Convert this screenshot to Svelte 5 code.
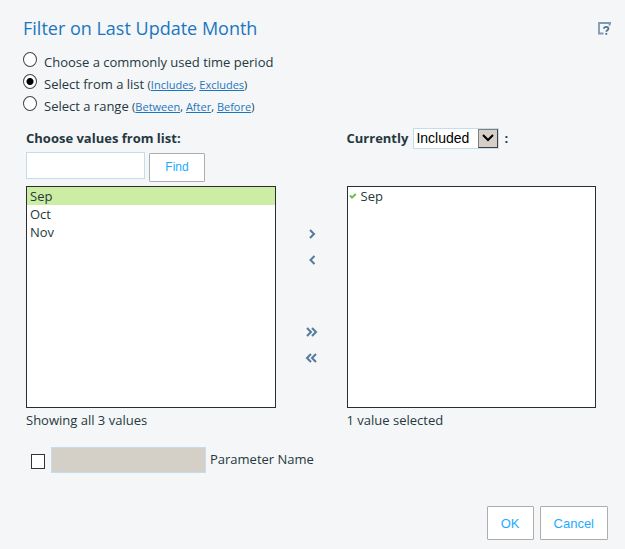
<script>
  const periods = [
    { id: 'common', label: 'Choose a commonly used time period', links: [] },
    { id: 'list', label: 'Select from a list', links: ['Includes', 'Excludes'] },
    { id: 'range', label: 'Select a range', links: ['Between', 'After', 'Before'] }
  ];
  const months = ['Sep', 'Oct', 'Nov'];

  let mode = $state('list');
  let search = $state('');
  let active = $state('Sep');
  let chosen = $state(['Sep']);
  let inclusion = $state('Included');
  let useParameter = $state(false);
  let parameter = $state('');

  let visible = $derived(months.filter((m) => m.toLowerCase().includes(search.toLowerCase())));

  const add = () => {
    if (!chosen.includes(active)) chosen = [...chosen, active];
  };
  const remove = () => (chosen = chosen.filter((m) => m !== active));
  const addAll = () => (chosen = [...months]);
  const removeAll = () => (chosen = []);
</script>

<main class="dialog">
  <header>
    <h1>Filter on Last Update Month</h1>
    <button class="icon" aria-label="Help">
      <svg width="13" height="13" viewBox="0 0 13 13" fill="none" stroke="#7f9ab2">
        <path d="M5.5 11.5H1V1h11.2L11.2 3.6" stroke-width="1.8" />
        <path d="M6 6.8c0-2.5 4.4-2.5 4.4 0 0 1.5-2.1 1.3-2.1 3" stroke="#4f7595" stroke-width="1.8" />
        <path d="M8.3 10.9v1.9" stroke="#4f7595" stroke-width="1.8" />
      </svg>
    </button>
  </header>

  <div class="modes" role="radiogroup" aria-label="Filter type">
    {#each periods as p (p.id)}
      <div class="mode">
        <input type="radio" name="mode" id={p.id} value={p.id} bind:group={mode} />
        <span class="caption">
          <label for={p.id}>{p.label}</label>
          {#if p.links.length}
            <small>({#each p.links as link, i (link)}{i > 0 ? ', ' : ''}<a href="#{link}">{link}</a>{/each})</small>
          {/if}
        </span>
      </div>
    {/each}
  </div>

  <div class="picker">
    <section>
      <div class="heading"><label for="search">Choose values from list:</label></div>
      <div class="search">
        <input class="field" id="search" type="text" bind:value={search} />
        <button class="push find">Find</button>
      </div>
      <ul class="box">
        {#each visible as m (m)}
          <li><button class="row" class:active={m === active} onclick={() => (active = m)}>{m}</button></li>
        {/each}
      </ul>
      <p>Showing all {visible.length} values</p>
    </section>

    <div class="arrows">
      <button class="icon" aria-label="Add" onclick={add}>
        <svg width="14" height="10" viewBox="0 0 14 10"><path d="M5 1l4 4-4 4" /></svg>
      </button>
      <button class="icon" aria-label="Remove" onclick={remove}>
        <svg width="14" height="10" viewBox="0 0 14 10"><path d="M9.5 1l-4 4 4 4" /></svg>
      </button>
      <button class="icon all" aria-label="Add all" onclick={addAll}>
        <svg width="14" height="10" viewBox="0 0 14 10"><path d="M2 1l4 4-4 4M7 1l4 4-4 4" /></svg>
      </button>
      <button class="icon" aria-label="Remove all" onclick={removeAll}>
        <svg width="14" height="10" viewBox="0 0 14 10"><path d="M6 1L2 5l4 4M11 1L7 5l4 4" /></svg>
      </button>
    </div>

    <section>
      <div class="heading">
        <label for="inclusion">Currently</label>
        <span class="dropdown">
          <select id="inclusion" bind:value={inclusion}>
            <option>Included</option>
            <option>Excluded</option>
          </select>
          <span class="toggle">
            <svg width="12" height="8" viewBox="0 0 12 8" fill="none" stroke="#000" stroke-width="2"><path d="M1 1l5 5 5-5" /></svg>
          </span>
        </span>
        <span>:</span>
      </div>
      <div class="search"></div>
      <ul class="box">
        {#each chosen as m (m)}
          <li>
            <button class="row picked" onclick={() => (active = m)}>
              <svg width="8" height="7" viewBox="0 0 8 7" fill="none" stroke="#6cc04a" stroke-width="2"><path d="M1 2.3l2 2.3L6.8 1" /></svg>
              {m}
            </button>
          </li>
        {/each}
      </ul>
      <p>{chosen.length} value{chosen.length === 1 ? '' : 's'} selected</p>
    </section>
  </div>

  <div class="parameter">
    <input type="checkbox" aria-label="Use parameter" bind:checked={useParameter} />
    <input class="field" id="parameter" type="text" disabled={!useParameter} bind:value={parameter} />
    <label for="parameter">Parameter Name</label>
  </div>

  <footer>
    <button class="push">OK</button>
    <button class="push">Cancel</button>
  </footer>
</main>

<style>
  :global(body) {
    background: #f4f6f8;
  }

  .dialog {
    box-sizing: border-box;
    padding: 16px 17px 8px 23px;
    font: 13px/18px 'Open Sans', sans-serif;
    color: #263840;
  }

  .dialog * {
    box-sizing: border-box;
  }

  header {
    display: flex;
    justify-content: space-between;
    align-items: center;
    margin-right: -3px;
  }

  h1 {
    margin: 0;
    font-size: 18px;
    line-height: 25px;
    font-weight: 400;
    color: #1c76bf;
  }

  button {
    font: inherit;
    color: inherit;
    cursor: pointer;
  }

  .icon {
    display: flex;
    padding: 0;
    border: 0;
    background: none;
  }

  .modes {
    margin-top: 10px;
  }

  .mode {
    display: flex;
    gap: 7px;
    height: 22px;
  }

  .caption {
    padding-top: 2px;
  }

  input[type='radio'] {
    appearance: none;
    width: 14px;
    height: 15px;
    margin: 1px 0 0;
    border: 1px solid #444;
    border-radius: 50%;
    background: #fff;
  }

  input[type='radio']:checked {
    background: radial-gradient(circle, #000 3px, #fff 4px);
  }

  small {
    font-size: 11px;
  }

  a {
    color: #1c76bf;
  }

  .picker {
    display: flex;
    margin: 10px 12px 0 3px;
  }

  section {
    flex: 1;
  }

  .heading {
    display: flex;
    align-items: center;
    gap: 5px;
    height: 22px;
    font-weight: 700;
  }

  .search {
    display: flex;
    align-items: flex-start;
    gap: 4px;
    height: 37px;
    padding-top: 3px;
  }

  .field {
    width: 119px;
    height: 27px;
    padding: 0 4px;
    border: 1px solid #c5dcec;
    background: #fff;
    font: inherit;
  }

  .field:disabled {
    background: #d4d0c8;
  }

  .push {
    height: 34px;
    padding: 0 13px;
    border: 1px solid #adadad;
    border-radius: 1px;
    background: #fff;
    color: #1eabff;
    font: 13px 'Liberation Sans', Arial, sans-serif;
  }

  .find {
    width: 56px;
    height: 29px;
    margin-top: 1px;
    padding: 0 0 2px;
    font-size: 12px;
  }

  .box {
    height: 222px;
    margin: 0;
    padding: 0;
    border: 1px solid #2b2d30;
    background: #fff;
    list-style: none;
    overflow: auto;
  }

  .row {
    display: block;
    width: 100%;
    height: 18px;
    padding: 0 3px;
    border: 0;
    background: none;
    line-height: 18px;
    text-align: left;
  }

  .active {
    background: #cbeea4;
  }

  .picked {
    display: flex;
    align-items: center;
    gap: 4px;
    padding: 0 1px;
  }

  p {
    margin: 3px 0 0;
  }

  .arrows {
    display: flex;
    flex-direction: column;
    align-items: center;
    gap: 16px;
    width: 71px;
    padding: 102px 0 0 2px;
  }

  .arrows svg {
    fill: none;
    stroke: #557a9a;
    stroke-width: 2;
  }

  .all {
    margin-top: 46px;
  }

  .dropdown {
    display: grid;
    width: 86px;
    height: 21px;
    border: 1px solid #c5dcec;
    background: #fff;
  }

  .dropdown > * {
    grid-area: 1 / 1;
  }

  select {
    appearance: none;
    width: 100%;
    padding: 0 22px 0 2px;
    border: 0;
    background: none;
    font: 14px/18px 'Liberation Sans', Arial, sans-serif;
    color: #000;
  }

  .toggle {
    display: flex;
    justify-content: center;
    align-items: center;
    justify-self: end;
    width: 20px;
    border: 1px solid #808080;
    border-right-color: #404040;
    border-bottom-color: #404040;
    background: #d4d0c8;
    pointer-events: none;
  }

  .parameter {
    display: flex;
    gap: 4px;
    margin: 18px 0 0 8px;
  }

  .parameter label {
    padding-top: 3px;
  }

  .parameter .field {
    width: 155px;
    height: 26px;
  }

  input[type='checkbox'] {
    appearance: none;
    width: 14px;
    height: 15px;
    margin: 7px 2px 0 0;
    border: 1px solid #333;
    background: #fff;
  }

  input[type='checkbox']:checked {
    background: #333;
    box-shadow: inset 0 0 0 2px #fff;
  }

  footer {
    display: flex;
    justify-content: flex-end;
    gap: 6px;
    margin-top: 33px;
  }
</style>
